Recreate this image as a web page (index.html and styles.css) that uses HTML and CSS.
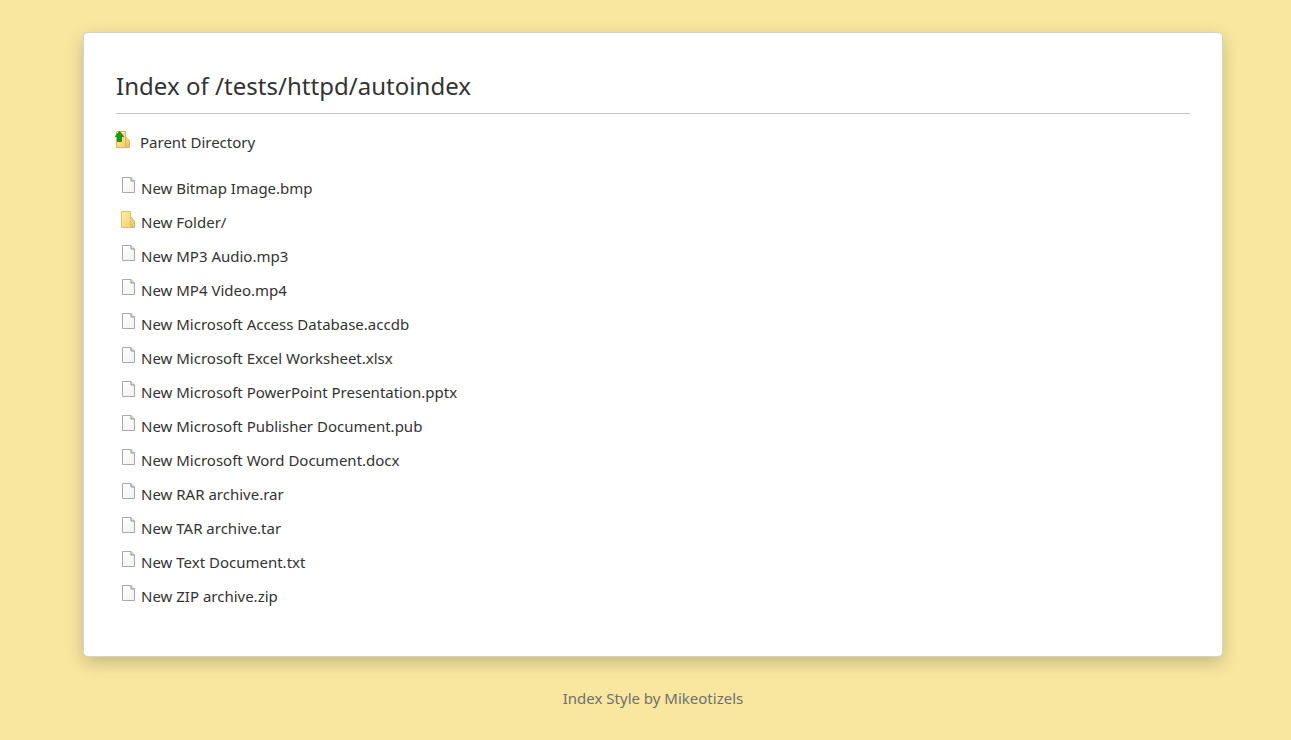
FILE: index.html
```html
<!DOCTYPE html>
<html lang="en">
<head>
<meta charset="utf-8">
<title>Index of /tests/httpd/autoindex</title>
<link rel="stylesheet" href="styles.css">
</head>
<body>
<svg class="defs" width="0" height="0"><defs>
  <linearGradient id="fold" x1="0" y1="0" x2="1" y2="1"><stop offset="0" stop-color="#fdeeaa"/><stop offset="1" stop-color="#f3d06c"/></linearGradient>
  <linearGradient id="fold2" x1="0" y1="0" x2="0" y2="1"><stop offset="0" stop-color="#f8df8c"/><stop offset="1" stop-color="#e8bf55"/></linearGradient>
  <linearGradient id="paper" x1="0" y1="0" x2="1" y2="1"><stop offset="0" stop-color="#ffffff"/><stop offset="1" stop-color="#f1f1f1"/></linearGradient>
  <g id="file"><path d="M.5.5H9L12.5 4V15.5H.5z" fill="url(#paper)" stroke="#a8a8a8"/><path d="M9 .5V4H12.5" fill="#e6e6e6" stroke="#8f8f8f"/></g>
  <g id="folder"><path d="M9.5 5.5L13.5 10V16.5H9.5z" fill="url(#fold2)" stroke="#dcb650"/><path d="M.5.5H9.5V16.5H.5z" fill="url(#fold)" stroke="#e3c264"/></g>
</defs></svg>
<div class="page">
  <main class="card">
    <h1 class="title">Index of /tests/httpd/autoindex</h1>
    <a class="parent" href="#">
      <svg class="icon-parent" width="16" height="18" viewBox="0 0 16 18"><path d="M10.5 5.5L14.5 10V16.5H10.5z" fill="url(#fold2)" stroke="#dcb650"/><path d="M1.5 .5H10.5V16.5H1.5z" fill="url(#fold)" stroke="#d8b658"/><path d="M4.5 .5L8.7 5.5H6.5V10.5H2.5V5.5H.3z" fill="#12a312" stroke="#0b7a0d" stroke-width=".8"/></svg>
      <span>Parent Directory</span>
    </a>
    <ul class="list">
      <li class="row"><svg class="ico" width="14" height="17" viewBox="0 0 14 17"><use href="#file"/></svg><span>New Bitmap Image.bmp</span></li>
      <li class="row"><svg class="ico" width="14" height="17" viewBox="1 0 14 17"><use href="#folder"/></svg><span>New Folder/</span></li>
      <li class="row"><svg class="ico" width="14" height="17" viewBox="0 0 14 17"><use href="#file"/></svg><span>New MP3 Audio.mp3</span></li>
      <li class="row"><svg class="ico" width="14" height="17" viewBox="0 0 14 17"><use href="#file"/></svg><span>New MP4 Video.mp4</span></li>
      <li class="row"><svg class="ico" width="14" height="17" viewBox="0 0 14 17"><use href="#file"/></svg><span>New Microsoft Access Database.accdb</span></li>
      <li class="row"><svg class="ico" width="14" height="17" viewBox="0 0 14 17"><use href="#file"/></svg><span>New Microsoft Excel Worksheet.xlsx</span></li>
      <li class="row"><svg class="ico" width="14" height="17" viewBox="0 0 14 17"><use href="#file"/></svg><span>New Microsoft PowerPoint Presentation.pptx</span></li>
      <li class="row"><svg class="ico" width="14" height="17" viewBox="0 0 14 17"><use href="#file"/></svg><span>New Microsoft Publisher Document.pub</span></li>
      <li class="row"><svg class="ico" width="14" height="17" viewBox="0 0 14 17"><use href="#file"/></svg><span>New Microsoft Word Document.docx</span></li>
      <li class="row"><svg class="ico" width="14" height="17" viewBox="0 0 14 17"><use href="#file"/></svg><span>New RAR archive.rar</span></li>
      <li class="row"><svg class="ico" width="14" height="17" viewBox="0 0 14 17"><use href="#file"/></svg><span>New TAR archive.tar</span></li>
      <li class="row"><svg class="ico" width="14" height="17" viewBox="0 0 14 17"><use href="#file"/></svg><span>New Text Document.txt</span></li>
      <li class="row"><svg class="ico" width="14" height="17" viewBox="0 0 14 17"><use href="#file"/></svg><span>New ZIP archive.zip</span></li>
    </ul>
  </main>
  <footer class="foot">Index Style by Mikeotizels</footer>
</div>
</body>
</html>
```
FILE: styles.css
```css
* { box-sizing: border-box; }
html, body { margin: 0; padding: 0; }
body {
  background: #f9e79f;
  color: #333;
  font-family: "Noto Sans", "Open Sans", sans-serif;
  font-size: 15px;
  height: 740px;
  overflow: hidden;
}
.page { width: 1140px; margin-left: 83px; padding-top: 32px; }
.card {
  height: 625px;
  background: #fff;
  border: 1px solid #d6d3c4;
  border-radius: 5px;
  box-shadow: 0 6px 18px rgba(0,0,0,.2);
  padding: 0 32px;
}
.title {
  margin: 0;
  height: 81px;
  padding-top: 35px;
  font-size: 24px;
  line-height: 36px;
  letter-spacing: .03px;
  font-weight: 400;
  color: #333;
  border-bottom: 1px solid #c4c4c4;
}
.parent {
  display: flex;
  align-items: flex-start;
  gap: 9px;
  margin: 16px 0 0 -1px;
  height: 24px;
  color: #333;
  text-decoration: none;
  line-height: 24px;
}
.icon-parent { flex: none; margin-top: 1px; }
.list { list-style: none; margin: 17px 0 0; padding: 0 0 0 6px; }
.row { display: flex; align-items: flex-start; gap: 5px; height: 34px; padding-top: 5px; line-height: 24px; }
.ico { flex: none; margin-top: 1px; overflow: visible; }
.foot { margin-top: 30px; text-align: center; color: #6f6f6f; font-size: 15px; line-height: 22px; }
.defs { position: absolute; }
```
